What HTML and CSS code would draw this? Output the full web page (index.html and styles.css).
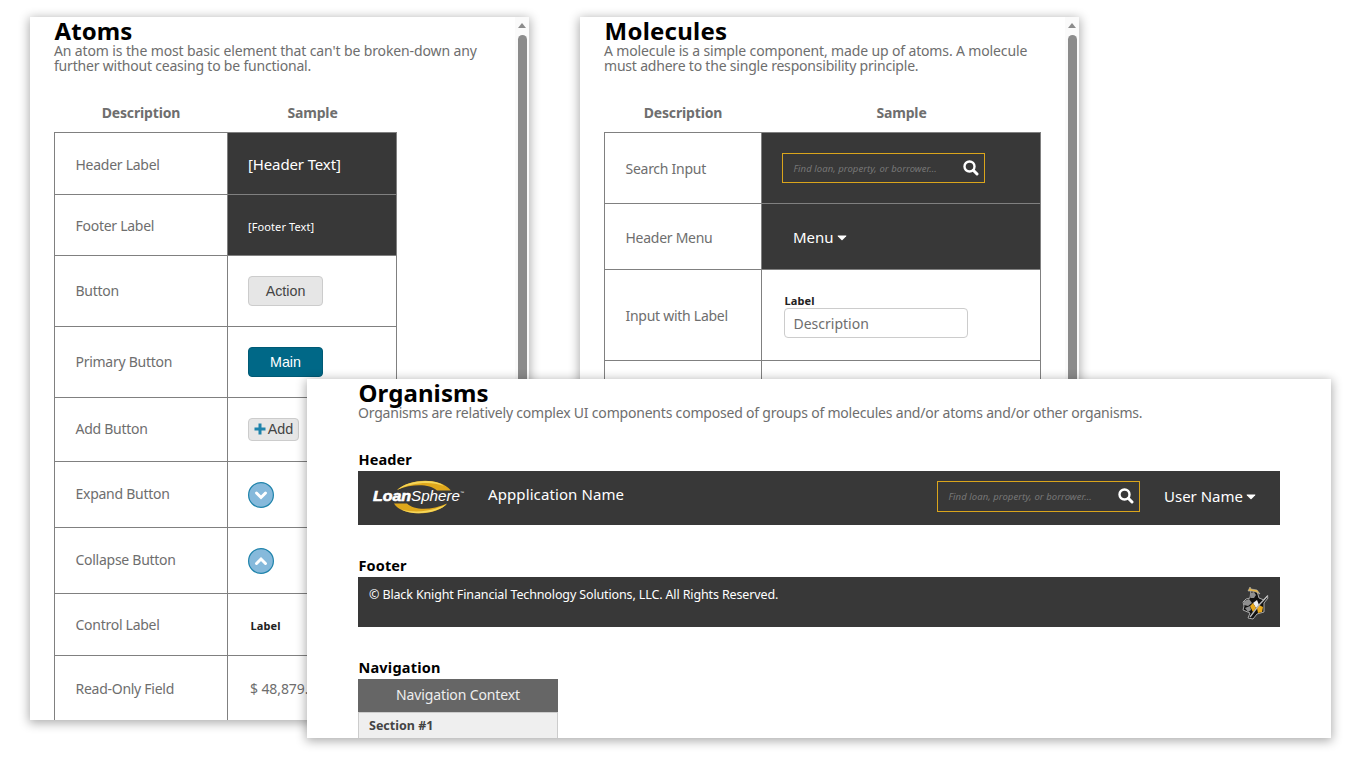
FILE: index.html
```html
<!DOCTYPE html>
<html lang="en">
<head>
<meta charset="utf-8">
<title>Pattern Library</title>
<link rel="stylesheet" href="styles.css">
</head>
<body>
<svg class="defs" width="0" height="0">
  <defs>
    <symbol id="search" viewBox="0 0 16 16"><circle cx="6.5" cy="6.5" r="5" fill="none" stroke="#fff" stroke-width="2.4"/><path d="M10.3 10.3L14 14" stroke="#fff" stroke-width="3" stroke-linecap="round"/></symbol>
    <symbol id="caret" viewBox="0 0 10 6"><path d="M1 .4H9Q9.8.6 9.2 1.3L5.5 5Q5 5.500 4.500 5L.8 1.300Q.2.6 1 .4Z" fill="#fff"/></symbol>
  </defs>
</svg>
<main class="desk">
  <section class="panel panel-atoms">
    <div class="content">
      <h1 class="title">Atoms</h1>
      <p class="lead"><span class="line-a">An atom is the most basic element that can't be broken-down any</span><br><span class="line-b">further without ceasing to be functional.</span></p>
      <div class="table table-atoms">
        <div class="head"><span>Description</span><span>Sample</span></div>
        <div class="row r62"><div class="name low">Header Label</div><div class="cell dark"><span class="header-text">[Header Text]</span></div></div>
        <div class="row r61"><div class="name">Footer Label</div><div class="cell dark"><span class="footer-text">[Footer Text]</span></div></div>
        <div class="row r71"><div class="name high">Button</div><div class="cell"><button class="btn">Action</button></div></div>
        <div class="row r71"><div class="name high">Primary Button</div><div class="cell"><button class="btn primary">Main</button></div></div>
        <div class="row r64"><div class="name high">Add Button</div><div class="cell lift"><button class="btn add"><svg width="12" height="12" viewBox="0 0 12 12"><path d="M6 .5V11.500M.5 6H11.500" stroke="#1f83ab" stroke-width="3"/></svg>Add</button></div></div>
        <div class="row r66"><div class="name high">Expand Button</div><div class="cell"><svg width="26" height="26" viewBox="0 0 26 26"><circle cx="13" cy="13" r="12.400" fill="#86b9db" stroke="#1f83ab" stroke-width="1.200"/><path d="M8.500 11L13 15.500L17.500 11" fill="none" stroke="#fff" stroke-width="3" stroke-linecap="round"/></svg></div></div>
        <div class="row r66"><div class="name high">Collapse Button</div><div class="cell"><svg width="26" height="26" viewBox="0 0 26 26"><circle cx="13" cy="13" r="12.400" fill="#86b9db" stroke="#1f83ab" stroke-width="1.200"/><path d="M8.500 15.500L13 11L17.500 15.500" fill="none" stroke="#fff" stroke-width="3" stroke-linecap="round"/></svg></div></div>
        <div class="row r62"><div class="name">Control Label</div><div class="cell inset"><span class="label">Label</span></div></div>
        <div class="row r66"><div class="name">Read-Only Field</div><div class="cell inset"><span class="value">$ 48,879.00</span></div></div>
      </div>
    </div>
    <div class="scroll"><i class="arrow"></i><i class="thumb"></i></div>
  </section>

  <section class="panel panel-molecules">
    <div class="content">
      <h1 class="title wide">Molecules</h1>
      <p class="lead"><span class="line-a tight">A molecule is a simple component, made up of atoms. A molecule</span><br><span class="line-b">must adhere to the single responsibility principle.</span></p>
      <div class="table table-molecules">
        <div class="head"><span>Description</span><span>Sample</span></div>
        <div class="row r71"><div class="name">Search Input</div><div class="cell dark"><div class="search"><span>Find loan, property, or borrower...</span><svg width="16" height="16"><use href="#search"/></svg></div></div></div>
        <div class="row r66"><div class="name low">Header Menu</div><div class="cell dark menu-cell"><div class="menu"><span>Menu</span><svg width="10" height="6"><use href="#caret"/></svg></div></div></div>
        <div class="row r91"><div class="name">Input with Label</div><div class="cell"><div class="field"><span class="label">Label</span><div class="input">Description</div></div></div></div>
        <div class="row r71"><div class="name"></div><div class="cell"></div></div>
      </div>
    </div>
    <div class="scroll"><i class="arrow"></i><i class="thumb"></i></div>
  </section>

  <section class="panel panel-organisms">
    <h1 class="title">Organisms</h1>
    <p class="lead line-b">Organisms are relatively complex UI components composed of groups of molecules and/or atoms and/or other organisms.</p>
    <h2 class="sub sub-header">Header</h2>
    <div class="app-header">
      <svg class="logo" width="94" height="34" viewBox="0 0 94 34">
        <path d="M25 10C36-.5 66-4 79 10.500L65 10.500C58 4.500 42 3 25 10Z" fill="#dfa81c"/>
        <path d="M25 10C37-1 64-1.500 72 6C60 1.500 42 1.500 25 10Z" fill="#f5d65a"/>
        <path d="M75 23.500C65 36 30 37 22 23.500L35 23.500C42 30.500 60 30.500 75 23.500Z" fill="#dfa81c"/>
        <path d="M75 24C64 34.500 40 35.500 29 29.500C42 33 60 32 75 24Z" fill="#f5d65a"/>
        <text x="1" y="21" class="logo-bold" textLength="38" lengthAdjust="spacingAndGlyphs">Loan</text>
        <text x="39" y="21" class="logo-light" textLength="49" lengthAdjust="spacingAndGlyphs">Sphere</text>
        <text x="88" y="14" class="logo-tm">™</text>
      </svg>
      <span class="app-name">Appplication Name</span>
      <div class="search search-tall"><span>Find loan, property, or borrower...</span><svg width="16" height="16"><use href="#search"/></svg></div>
      <div class="menu"><span class="user">User Name</span><svg width="10" height="6"><use href="#caret"/></svg></div>
    </div>
    <h2 class="sub">Footer</h2>
    <div class="app-footer">
      <span class="copy">© Black Knight Financial Technology Solutions, LLC. All Rights Reserved.</span>
      <svg class="knight" width="28" height="34" viewBox="0 0 28 34">
        <path d="M9 4L15 5L17 12L22 14L25 10L26 12L22 17L22 26L15 28L11 33L6 32L8 27L1 24L2 20L1 16L4 13L8 12Z" fill="#111" stroke="#aaa" stroke-width="1"/>
        <path d="M6 5L8 1L9 3L15 4L18 8L14 6L9 5Z" fill="#e8b33a" stroke="#bbb" stroke-width=".6"/>
        <path d="M8 7L12 6L14 9L12 12L9 12ZM2 15L7 13L10 17L6 20L2 19ZM3 22L8 20L9 24L6 26Z" fill="#8f8f8f"/>
        <path d="M11 17L15 14L17 19L14 22Z" fill="#eee"/><path d="M8 20L11 17L14 22L11 26Z M15 22L17 19L21 21L20 26L16 27Z" fill="#e9a91c"/>
        <path d="M8 31L17 19L26 9.500" fill="none" stroke="#bbb" stroke-width="1.300"/>
      </svg>
    </div>
    <h2 class="sub sub-nav">Navigation</h2>
    <nav class="nav"><div class="nav-context"><span>Navigation Context</span></div><div class="nav-section"><span>Section #1</span></div></nav>
  </section>
</main>
</body>
</html>
```

FILE: styles.css
```css
* { box-sizing: border-box; }
body { margin: 0; background: #fff; font-family: "Noto Sans", sans-serif; color: #6e6e6e; }
.defs { position: absolute; }
.desk { position: relative; width: 1361px; height: 768px; overflow: hidden; }
.panel { position: absolute; background: #fff; overflow: hidden; box-shadow: 0 2px 10px 1px rgba(0,0,0,.33); }
.panel-atoms { left: 30px; top: 17px; width: 499px; height: 703px; display: flex; }
.panel-molecules { left: 580px; top: 17px; width: 499px; height: 703px; display: flex; }
.panel-organisms { left: 307px; top: 379px; width: 1024px; height: 359px; padding: 0 51px; }
.content { flex: 1; padding-left: 24px; }
.scroll { width: 14px; background: #fafafa; display: flex; flex-direction: column; align-items: center; padding-top: 6px; }
.arrow { border: 4.5px solid transparent; border-top: 0; border-bottom: 5px solid #8b8b8b; }
.thumb { width: 9px; flex: 1; margin-top: 7px; background: #8b8b8b; border-radius: 5px 5px 0 0; }
.title { margin: 0; height: 26px; color: #000; font-size: 24px; line-height: 28px; font-weight: 700; white-space: nowrap; padding-left: .5px; letter-spacing: .1px; }
.wide { letter-spacing: .25px; }
.lead { margin: 0; font-size: 14px; line-height: 15px; white-space: nowrap; }
.line-a { letter-spacing: -.125px; }
.tight { letter-spacing: -.14px; }
.line-b { letter-spacing: -.2px; }
.table { margin-top: 20px; }
.row, .head { display: grid; }
.head { height: 40px; border-bottom: 1px solid #808080; font-size: 14px; font-weight: 700; text-align: center; line-height: 40px; letter-spacing: -.15px; }
.table-atoms { width: 343px; }
.table-atoms .row, .table-atoms .head { grid-template-columns: 174px 169px; }
.table-molecules { width: 437px; }
.table-molecules .row, .table-molecules .head { grid-template-columns: 158px 279px; }
.row { border-bottom: 1px solid #808080; }
.name { border: solid #808080; border-width: 0 1px; padding-left: 20.5px; font-size: 14px; letter-spacing: -.27px; display: flex; align-items: center; }
.name.high { padding-bottom: 2px; }
.name.low { padding-top: 2px; }
.cell { border-right: 1px solid #808080; padding-left: 20px; display: flex; align-items: center; }
.lift { padding-bottom: 1px; }
.dark { background: #383838; color: #fff; }
.r61 { height: 61px; } .r62 { height: 62px; } .r64 { height: 64px; } .r66 { height: 66px; } .r71 { height: 71px; } .r91 { height: 91px; }
.header-text { font-size: 15px; letter-spacing: -.13px; }
.footer-text { font-size: 11px; letter-spacing: .1px; padding-top: 2px; }
.btn { width: 75px; height: 30px; border: 1px solid #ccc; border-radius: 4px; background: #e6e6e6; color: #444; font: 14.3px "Liberation Sans", sans-serif; padding: 0; }
.primary { background: #006887; border-color: #005a75; color: #fff; }
.add { width: 51px; height: 23px; display: flex; align-items: center; justify-content: center; gap: 2px; }
.inset { padding-left: 22px; }
.label { color: #222; font-size: 11px; font-weight: 700; line-height: 15px; letter-spacing: .1px; padding-left: .5px; }
.inset .label { padding-top: 1px; }
.value { font-size: 14px; letter-spacing: -.1px; }
.search { width: 203px; height: 30px; border: 1px solid #daa51c; display: flex; align-items: center; justify-content: space-between; padding: 0 5px 0 10.5px; font-size: 9.5px; font-style: italic; letter-spacing: .06px; color: #777; }
.search svg { margin-bottom: 1px; }
.search-tall { height: 31px; margin-top: 1px; }
.menu { display: flex; align-items: center; gap: 3px; font-size: 15px; color: #fff; }
.menu svg { margin-top: 2px; }
.menu-cell { padding-left: 31px; }
.field { padding-left: 2px; display: flex; flex-direction: column; }
.input { width: 184px; height: 30px; border: 1px solid #ccc; border-radius: 4px; padding-left: 8.5px; font-size: 14px; line-height: 29px; }
.sub { margin: 0; color: #000; font-size: 14.5px; line-height: 24px; height: 24px; margin-top: 28px; padding-left: .5px; letter-spacing: .1px; }
.sub-header { margin-top: 27px; }
.sub-nav { letter-spacing: .2px; }
.app-header { width: 922px; height: 54px; background: #383838; color: #fff; display: flex; align-items: flex-start; padding-top: 9px; padding-left: 14px; }
.app-name { font-size: 15px; letter-spacing: .1px; margin-left: 22px; line-height: 28px; width: 449px; }
.app-header .menu { margin-left: 24px; line-height: 32px; }
.logo-bold { font: italic 700 15px "Liberation Sans", sans-serif; fill: #fff; stroke: #fff; stroke-width: .6; }
.logo-light { font: italic 15.5px "Liberation Sans", sans-serif; fill: #fff; }
.logo-tm { font: 4px "Liberation Sans", sans-serif; fill: #fff; }
.app-footer { width: 922px; height: 50px; background: #383838; color: #fff; display: flex; justify-content: space-between; padding: 9px 10px 0 11px; }
.copy { font-size: 12.5px; letter-spacing: -.13px; line-height: 18px; }
.nav { width: 200px; }
.nav-context { height: 33px; background: #666; color: #eee; text-align: center; font-size: 14px; letter-spacing: -.13px; line-height: 31px; }
.nav-section { height: 40px; background: #efefef; border: 1px solid #ccc; padding-left: 10px; color: #444; font-size: 12.5px; font-weight: 700; line-height: 26px; }
```
